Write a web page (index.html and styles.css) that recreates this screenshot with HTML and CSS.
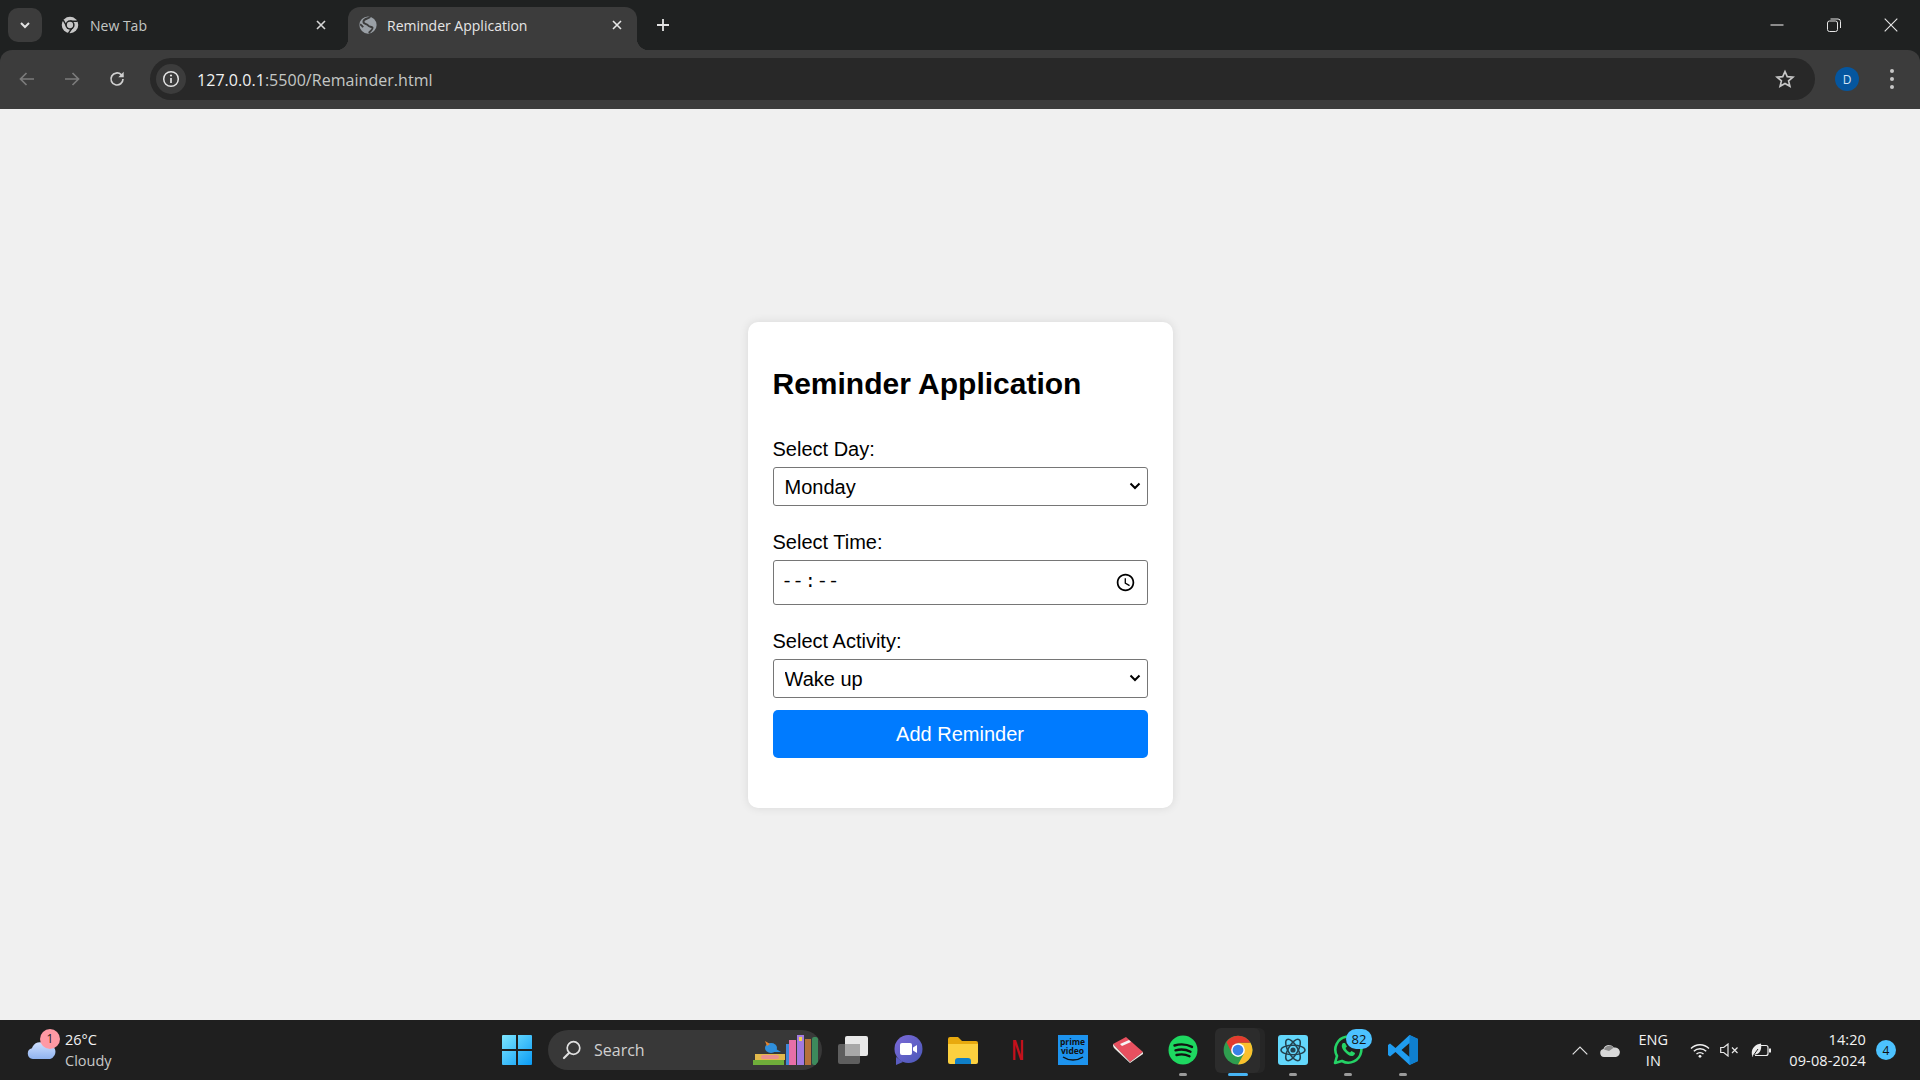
FILE: index.html
```html
<!DOCTYPE html>
<html lang="en">
<head>
<meta charset="utf-8">
<title>Reminder Application</title>
<link rel="stylesheet" href="styles.css">
</head>
<body>
<div class="window">
  <header class="tabstrip">
    <button class="tab-search" type="button" aria-label="Search tabs">
      <svg width="12" height="12" viewBox="0 0 12 12"><path d="M2 4l4 4 4-4" fill="none" stroke="#e3e3e3" stroke-width="2"/></svg>
    </button>
    <div class="tab">
      <svg class="tab-icon" width="18" height="18" viewBox="0 0 24 24"><circle cx="12" cy="12" r="11" fill="#c7c7c7"/><path d="M12 7H22M8 14.500L3 5.500M15.500 15L10 23" stroke="#1f2121" stroke-width="1.800" fill="none"/><circle cx="12" cy="12" r="6.200" fill="#1f2121"/><circle cx="12" cy="12" r="4.200" fill="#c7c7c7"/></svg>
      <span class="tab-title">New Tab</span>
      <svg class="tab-close" width="12" height="12" viewBox="0 0 12 12"><path d="M2 2l8 8M10 2l-8 8" stroke="#d6d6d6" stroke-width="1.600"/></svg>
    </div>
    <div class="tab tab-active">
      <svg class="tab-icon" width="18" height="18" viewBox="0 0 24 24"><circle cx="12" cy="12" r="11.500" fill="#9aa0a6"/><path d="M15 1.500C12 4 7 3 6 7s5 3.500 6 5.500 5 1.500 6 3-3 5-5 7M1.500 11c1.500 1 3 2.500 4 4" fill="none" stroke="#3c3c3c" stroke-width="2.600"/></svg>
      <span class="tab-title">Reminder Application</span>
      <svg class="tab-close" width="12" height="12" viewBox="0 0 12 12"><path d="M2 2l8 8M10 2l-8 8" stroke="#e8e8e8" stroke-width="1.600"/></svg>
    </div>
    <svg class="new-tab" width="16" height="16" viewBox="0 0 16 16"><path d="M8 2v12M2 8h12" stroke="#e3e3e3" stroke-width="1.800"/></svg>
    <div class="window-controls">
      <svg width="14" height="14" viewBox="0 0 14 14"><path d="M0.500 7h13" stroke="#e6e6e6" stroke-width="1.100"/></svg>
      <svg width="14" height="14" viewBox="0 0 14 14"><rect x="0.500" y="3" width="10" height="10.500" rx="2" fill="none" stroke="#e6e6e6" stroke-width="1"/><path d="M3.500 1h7.500a2.500 2.500 0 0 1 2.500 2.500V10" fill="none" stroke="#e6e6e6" stroke-width="1"/></svg>
      <svg width="14" height="14" viewBox="0 0 14 14"><path d="M0.700 0.700l12.600 12.600M13.300 0.700L0.700 13.300" stroke="#e6e6e6" stroke-width="1.100"/></svg>
    </div>
  </header>

  <nav class="toolbar">
    <div class="nav-buttons">
      <svg width="18" height="18" viewBox="0 0 18 18"><path d="M16 9H3M8.500 3L2.500 9l6 6" fill="none" stroke="#7b7b7b" stroke-width="1.700"/></svg>
      <svg width="18" height="18" viewBox="0 0 18 18"><path d="M2 9h13M9.500 3l6 6-6 6" fill="none" stroke="#7b7b7b" stroke-width="1.700"/></svg>
      <svg width="18" height="18" viewBox="0 0 18 18"><path d="M15 9a6 6 0 1 1-1.800-4.300L15 6.500" fill="none" stroke="#d0d0d0" stroke-width="1.700"/><path d="M15.700 1.800v5.400h-5.400z" fill="#d0d0d0"/></svg>
    </div>
    <div class="omnibox">
      <span class="site-info">
        <svg width="18" height="18" viewBox="0 0 18 18"><circle cx="9" cy="9" r="7.300" fill="none" stroke="#e3e3e3" stroke-width="1.500"/><path d="M9 8v5" stroke="#e3e3e3" stroke-width="1.700"/><circle cx="9" cy="5.500" r="1.100" fill="#e3e3e3"/></svg>
      </span>
      <span class="url"><span class="url-host">127.0.0.1</span>:5500/Remainder.html</span>
      <svg class="star" width="20" height="20" viewBox="0 0 24 24"><path d="M12 3l2.700 6.200 6.800.6-5.200 4.400 1.600 6.600L12 17.300l-5.900 3.500 1.600-6.600L2.500 9.800l6.800-.6z" fill="none" stroke="#c7c7c7" stroke-width="2"/></svg>
    </div>
    <span class="avatar">D</span>
    <span class="kebab"><i></i><i></i><i></i></span>
  </nav>

  <main class="page">
    <section class="card">
      <h1 class="card-title">Reminder Application</h1>
      <label class="field-label" for="day">Select Day:</label>
      <select class="field-select" id="day">
        <option>Monday</option><option>Tuesday</option><option>Wednesday</option><option>Thursday</option><option>Friday</option><option>Saturday</option><option>Sunday</option>
      </select>
      <label class="field-label" for="time">Select Time:</label>
      <input class="field-time" id="time" type="time">
      <label class="field-label" for="activity">Select Activity:</label>
      <select class="field-select" id="activity">
        <option>Wake up</option><option>Go to gym</option><option>Breakfast</option><option>Meetings</option><option>Lunch</option><option>Quick nap</option><option>Go to library</option><option>Dinner</option><option>Go to sleep</option>
      </select>
      <button class="add-button" type="button">Add Reminder</button>
    </section>
  </main>

  <footer class="taskbar">
    <div class="weather">
      <span class="weather-icon">
        <svg width="30" height="20" viewBox="0 0 32 22"><defs><linearGradient id="cloud" x1="0" y1="0" x2="0" y2="1"><stop offset="0" stop-color="#cfe0ff"/><stop offset="1" stop-color="#8fb2ee"/></linearGradient></defs><path d="M7 21a6 6 0 0 1-1-11.800A9 9 0 0 1 21 5a7 7 0 0 1 5 16z" fill="url(#cloud)"/></svg>
        <span class="weather-badge">1</span>
      </span>
      <span class="weather-text"><span class="temp">26°C</span><span class="sky">Cloudy</span></span>
    </div>

    <div class="task-center">
      <span class="start">
        <svg width="30" height="30" viewBox="0 0 30 30"><defs><linearGradient id="win" x1="0" y1="0" x2="1" y2="1"><stop offset="0" stop-color="#7de6ff"/><stop offset="1" stop-color="#0a9bf5"/></linearGradient></defs><path d="M0 1a1 1 0 0 1 1-1h13v14H0zM16 0h13a1 1 0 0 1 1 1v13H16zM0 16h14v14H1a1 1 0 0 1-1-1zM16 16h14v13a1 1 0 0 1-1 1H16z" fill="url(#win)"/></svg>
      </span>
      <div class="search-pill">
        <svg width="20" height="20" viewBox="0 0 20 20"><circle cx="11.500" cy="8" r="6.300" fill="none" stroke="#e0e0e0" stroke-width="1.700"/><path d="M7 13l-5 5" stroke="#e0e0e0" stroke-width="2.200" stroke-linecap="round"/></svg>
        <span class="search-text">Search</span>
        <svg class="books" width="68" height="32" viewBox="0 0 68 32"><rect x="1" y="26" width="31" height="5" fill="#6fae3a"/><rect x="3" y="20" width="30" height="6" fill="#e2b94c"/><rect x="9" y="21" width="18" height="4" rx="2" fill="#e98f8f"/><ellipse cx="19" cy="14" rx="6" ry="5" fill="#2f8fdc"/><path d="M21 18l8 0-5-3z" fill="#2f8fdc"/><path d="M13 7l5 3-3 2z" fill="#e8832a"/><rect x="34" y="10" width="3" height="21" fill="#3f86d8"/><rect x="37" y="6" width="7" height="25" fill="#e76fa8"/><rect x="45" y="1" width="7" height="30" fill="#a27ae0"/><rect x="47" y="3" width="3" height="4" fill="#f0d050"/><rect x="53" y="5" width="6" height="26" fill="#b5713a"/><rect x="60" y="3" width="6" height="28" rx="2" fill="#3d8a5c"/></svg>
      </div>
      <div class="apps">
        <span class="app">
          <svg width="30" height="28" viewBox="0 0 30 28"><rect x="0" y="8" width="22" height="20" rx="2" fill="#5e5e5e"/><rect x="7" y="0" width="23" height="20" rx="2" fill="#e8e8e8"/><rect x="7" y="8" width="15" height="12" fill="#a8a8a8"/></svg>
        </span>
        <span class="app">
          <svg width="30" height="30" viewBox="0 0 30 30"><defs><linearGradient id="meet" x1="0" y1="0" x2="1" y2="1"><stop offset="0" stop-color="#7c6ad8"/><stop offset="1" stop-color="#4a58b8"/></linearGradient></defs><circle cx="15.500" cy="14" r="14" fill="url(#meet)"/><path d="M3 22l0 8 7-3z" fill="#5a5cc0"/><rect x="7" y="8" width="12" height="12" rx="2" fill="#fff"/><path d="M20 12.500l4-2.500v8l-4-2.500z" fill="#fff"/></svg>
        </span>
        <span class="app">
          <svg width="30" height="27" viewBox="0 0 30 27"><path d="M0 2a2 2 0 0 1 2-2h8l4 4h14a2 2 0 0 1 2 2v4H0z" fill="#e8a90e"/><path d="M0 7h30v18a2 2 0 0 1-2 2H2a2 2 0 0 1-2-2z" fill="#fcd03f"/><path d="M7 24a3 3 0 0 1 3-3h10a3 3 0 0 1 3 3v3H7z" fill="#0f7fc8"/></svg>
        </span>
        <span class="app"><span class="netflix">N</span></span>
        <span class="app">
          <span class="prime"><span class="prime-line">prime</span><span class="prime-line">video</span><svg width="22" height="6" viewBox="0 0 22 6"><path d="M1 1c6 4 14 4 20 0" fill="none" stroke="#111" stroke-width="1.500"/></svg></span>
        </span>
        <span class="app">
          <svg width="32" height="28" viewBox="0 0 32 28"><path d="M1 8L14 1l17 15-13 10z" fill="#e8505f"/><path d="M1 8c0 2 0 3 2 5l15 14 13-9 0-2-13 10z" fill="#efe9e4"/><path d="M8 8l9-4 2 2-9 4z" fill="#f5f5f5"/></svg>
        </span>
        <span class="app running">
          <svg width="30" height="30" viewBox="0 0 30 30"><circle cx="15" cy="15" r="14.500" fill="#1ed760"/><path d="M6.500 10.500c6-1.800 12-1.400 17.500 1.400M7.500 15.300c5-1.400 10.500-1 15 1.400M8.500 20c4.500-1.100 9-.8 13 1.200" fill="none" stroke="#111" stroke-width="2.400" stroke-linecap="round"/></svg>
        </span>
        <span class="app app-active">
          <svg width="30" height="30" viewBox="0 0 24 24"><circle cx="12" cy="12" r="11.500" fill="#2f9e4f"/><path d="M21.960 6.250A11.500 11.500 0 0 1 12 23.500L16.800 14.800 12 6.250z" fill="#fbc02d"/><path d="M12 .5A11.500 11.500 0 0 1 21.960 6.250H12L7.200 14.800 2.800 5.500A11.500 11.500 0 0 1 12 .5z" fill="#e33b2e"/><circle cx="12" cy="12" r="5.500" fill="#fff"/><circle cx="12" cy="12" r="4.300" fill="#3b82e8"/></svg>
        </span>
        <span class="app running">
          <span class="atom"><svg width="26" height="26" viewBox="0 0 26 26"><g fill="none" stroke="#24424f" stroke-width="1.500"><ellipse cx="13" cy="13" rx="12" ry="4.800"/><ellipse cx="13" cy="13" rx="12" ry="4.800" transform="rotate(60 13 13)"/><ellipse cx="13" cy="13" rx="12" ry="4.800" transform="rotate(120 13 13)"/></g><circle cx="13" cy="13" r="2.600" fill="#24424f"/></svg></span>
        </span>
        <span class="app running">
          <svg width="30" height="30" viewBox="0 0 30 30"><path d="M2 28l2-7A13 13 0 1 1 9 26z" fill="none" stroke="#25d366" stroke-width="2.600" stroke-linejoin="round"/><path d="M10 8c-2 2-1.500 5 1.500 8.500S18 22 20.500 20.500c1-.7 1.500-1.500 1.500-2.500l-3.500-2-1.500 1.500c-2-.7-3.700-2.500-4.500-4.500L14 11.500 12 8z" fill="#25d366"/></svg>
          <span class="count-badge">82</span>
        </span>
        <span class="app running">
          <svg width="30" height="30" viewBox="0 0 30 30"><path d="M21.500 0L30 4v22l-8.500 4L7.500 17 2 21.500 0 20v-10l2-1.500L7.500 13zM21.500 8l-8 7 8 7z" fill="#1f9cf0"/><path d="M21.500 0L30 4v22l-8.500 4V22l0-14z" fill="#0f7fcf"/></svg>
        </span>
      </div>
    </div>

    <div class="tray">
      <svg class="tray-chevron" width="16" height="9" viewBox="0 0 16 9"><path d="M.7 8.300L8 1l7.300 7.300" fill="none" stroke="#e0e0e0" stroke-width="1.200"/></svg>
      <svg class="tray-cloud" width="20" height="13" viewBox="0 0 20 13"><path d="M4 13a4 4 0 0 1-.6-7.900A6 6 0 0 1 14 3.500 4.800 4.800 0 0 1 16 13z" fill="#d8d8d8"/><path d="M4 5.500A6 6 0 0 1 14 3.500L9 7z" fill="#8a8a8a"/></svg>
      <span class="lang"><span>ENG</span><span>IN</span></span>
      <svg class="tray-wifi" width="20" height="15" viewBox="0 0 20 15"><path d="M1 5.500c5-5 13-5 18 0M3.800 8.300c3.500-3.400 9-3.400 12.400 0M6.500 11c2-1.800 5-1.800 7 0" fill="none" stroke="#f0f0f0" stroke-width="1.400"/><circle cx="10" cy="13.300" r="1.400" fill="#f0f0f0"/></svg>
      <svg class="tray-vol" width="19" height="14" viewBox="0 0 19 14"><path d="M.7 4.500h3L8 1v12L3.700 9.500h-3z" fill="none" stroke="#e8e8e8" stroke-width="1.200"/><path d="M12 4.500l5.500 5.500M17.500 4.500L12 10" stroke="#e8e8e8" stroke-width="1.200"/></svg>
      <svg class="tray-batt" width="20" height="15" viewBox="0 0 20 15"><path d="M10 2.500h5a2 2 0 0 1 2 2v6a2 2 0 0 1-2 2H4" fill="none" stroke="#ececec" stroke-width="1.200"/><rect x="18" y="5.500" width="2" height="4" fill="#ececec"/><path d="M1.500 14C-1 7 3 1.500 10 .5c1 6-1 11-7 11.500z" fill="#ececec"/><path d="M2 13l5-7" stroke="#1f1f1f" stroke-width="1"/></svg>
      <span class="clock"><span>14:20</span><span>09-08-2024</span></span>
      <span class="notify">4</span>
    </div>
  </footer>
</div>
</body>
</html>
```

FILE: styles.css
```css
* { box-sizing: border-box; }

html, body { margin: 0; height: 100%; }

body { font-family: "Liberation Sans", Arial, sans-serif; background: #f0f0f0; overflow: hidden; }

.window { display: flex; flex-direction: column; height: 100vh; background: #1f2121; }

/* Tab strip */
.tabstrip {
  position: relative;
  flex: none;
  height: 50px;
  padding-left: 8px;
  display: flex;
  align-items: flex-end;
  background: #1f2121;
  font-family: "Open Sans", "Noto Sans", sans-serif;
}

.tab-search {
  align-self: flex-start;
  width: 34px;
  height: 34px;
  margin: 8px 6px 0 0;
  padding: 0;
  border: 0;
  border-radius: 10px;
  background: #3c3c3c;
  display: flex;
  align-items: center;
  justify-content: center;
}

.tab {
  position: relative;
  width: 289px;
  height: 43px;
  margin-right: 11px;
  padding: 0 10px 7px 13px;
  display: flex;
  align-items: center;
  gap: 11px;
  border-radius: 12px 12px 0 0;
  font-size: 14px;
  color: #c4c7c5;
}

.tab-active {
  margin-right: 0;
  padding: 0 14px 7px 11px;
  gap: 10px;
  background: #3c3c3c;
  color: #e6e6e6;
}

.tab-active::before,
.tab-active::after {
  content: "";
  position: absolute;
  bottom: 0;
  width: 12px;
  height: 12px;
}

.tab-active::before { left: -12px; background: radial-gradient(circle at 0 0, transparent 12px, #3c3c3c 12.500px); }
.tab-active::after { right: -12px; background: radial-gradient(circle at 100% 0, transparent 12px, #3c3c3c 12.500px); }

.tab-icon { flex: none; }
.tab-title { flex: 1; }
.tab-close { flex: none; }

.new-tab { align-self: center; margin: 0 0 0 18px; }

.window-controls {
  position: absolute;
  top: 18px;
  right: 22px;
  display: flex;
  gap: 43px;
}

/* Toolbar */
.toolbar {
  flex: none;
  height: 59px;
  padding: 8px 20px 9px 18px;
  display: flex;
  align-items: center;
  background: #3c3c3c;
  border-radius: 12px 12px 0 0;
}

.nav-buttons { display: flex; gap: 27px; width: 132px; }

.omnibox {
  flex: none;
  width: 1665px;
  height: 42px;
  padding: 0 20px 0 6px;
  display: flex;
  align-items: center;
  border-radius: 21px;
  background: #282828;
}

.site-info {
  flex: none;
  width: 30px;
  height: 30px;
  border-radius: 50%;
  background: #3c3c3c;
  display: flex;
  align-items: center;
  justify-content: center;
}

.url {
  flex: 1;
  margin: 1px 0 0 11px;
  font-family: "Open Sans", "Noto Sans", sans-serif;
  font-size: 16px;
  letter-spacing: .04px;
  color: #c4c7c5;
}

.url-host { color: #f1f1f1; }

.avatar {
  flex: none;
  width: 24px;
  height: 24px;
  margin-left: 20px;
  border-radius: 50%;
  background: #05569f;
  color: #d6e4f5;
  font-family: "Open Sans", sans-serif;
  font-size: 12px;
  display: flex;
  align-items: center;
  justify-content: center;
}

.kebab {
  flex: none;
  margin-left: 31px;
  display: flex;
  flex-direction: column;
  gap: 4px;
}

.kebab i { width: 4px; height: 4px; border-radius: 50%; background: #c7c7c7; }

/* Page */
.page {
  flex: 1;
  min-height: 0;
  display: flex;
  align-items: center;
  justify-content: center;
  background: #f0f0f0;
}

.card {
  width: 425px;
  height: 486px;
  padding: 25px;
  display: flex;
  flex-direction: column;
  border-radius: 10px;
  background: #fff;
  box-shadow: 0 0 10px rgba(0, 0, 0, .1);
}

.card-title {
  margin: 18px 0 35px;
  font-size: 30px;
  line-height: 37px;
  font-weight: 700;
  color: #000;
}

.field-label {
  display: block;
  margin-bottom: 6px;
  padding-top: 1px;
  font-size: 20px;
  line-height: 23px;
  color: #000;
}

.field-select {
  width: 100%;
  height: 39px;
  margin-bottom: 24px;
  padding: 1px 24px 0 11px;
  appearance: none;
  font-family: "Liberation Sans", Arial, sans-serif;
  font-size: 20px;
  color: #000;
  background: #fff url("data:image/svg+xml,%3Csvg xmlns='http://www.w3.org/2000/svg' width='12' height='8' viewBox='0 0 12 8'%3E%3Cpath d='M1.500 1.500L6 6l4.500-4.500' fill='none' stroke='%23000' stroke-width='2'/%3E%3C/svg%3E") no-repeat right 6px center;
  border: 1px solid #767676;
  border-radius: 3px;
}

.field-time {
  width: 100%;
  height: 45px;
  margin-bottom: 24px;
  padding: 8px 8px 8px 7px;
  font-family: "Liberation Mono", monospace;
  font-size: 18.500px;
  color: #000;
  background: #fff;
  border: 1px solid #767676;
  border-radius: 3px;
}

.field-time::-webkit-datetime-edit-ampm-field { display: none; }
.field-time::-webkit-calendar-picker-indicator { font-size: 20px; }

#activity { margin-bottom: 12px; }

.add-button {
  width: 100%;
  height: 48px;
  padding: 1px 0 0;
  border: 0;
  border-radius: 5px;
  background: #007bff;
  color: #fff;
  font-family: "Liberation Sans", Arial, sans-serif;
  font-size: 20px;
}

/* Taskbar */
.taskbar {
  position: relative;
  flex: none;
  height: 60px;
  display: flex;
  align-items: center;
  background: #1f1f1f;
  font-family: "Open Sans", "Noto Sans", sans-serif;
  color: #f2f2f2;
}

.weather {
  flex: none;
  width: 502px;
  padding-left: 26px;
  display: flex;
  align-items: center;
  gap: 9px;
}

.weather-icon { position: relative; display: flex; margin-top: -1px; }

.weather-badge {
  position: absolute;
  top: -11px;
  right: -4px;
  width: 20px;
  height: 20px;
  border-radius: 50%;
  background: #ff99a4;
  color: #1f1f1f;
  font-size: 12px;
  display: flex;
  align-items: center;
  justify-content: center;
}

.weather-text { display: flex; flex-direction: column; font-size: 14.500px; line-height: 21px; }
.sky { color: #c8c8c8; }

.task-center { flex: none; display: flex; align-items: center; }
.start { display: flex; width: 46px; }

.search-pill {
  flex: none;
  width: 274px;
  height: 40px;
  padding: 0 2px 0 14px;
  display: flex;
  align-items: center;
  gap: 12px;
  overflow: hidden;
  border-radius: 20px;
  background: #383838;
}

.search-text { flex: 1; font-size: 16px; color: #d0d0d0; }
.books { flex: none; }

.apps { display: flex; margin-left: 8px; }

.app {
  position: relative;
  flex: none;
  width: 45px;
  height: 45px;
  margin-right: 10px;
  display: flex;
  align-items: center;
  justify-content: center;
}

.running::after {
  content: "";
  position: absolute;
  bottom: -3px;
  left: 50%;
  width: 8px;
  height: 3px;
  margin-left: -4px;
  border-radius: 2px;
  background: #9a9a9a;
}

.app-active {
  border-radius: 6px;
  background: #2c2c2c;
  box-shadow: 5px 0 0 #262626;
}

.app-active::after {
  content: "";
  position: absolute;
  bottom: -3px;
  left: 50%;
  width: 20px;
  height: 3px;
  margin-left: -10px;
  border-radius: 2px;
  background: #47b5f5;
}

.netflix {
  font-family: "Liberation Sans", sans-serif;
  font-size: 30px;
  font-weight: 700;
  line-height: 1;
  color: #c4101b;
  transform: scaleX(.56);
}

.prime {
  width: 30px;
  height: 30px;
  padding-top: 3px;
  display: flex;
  flex-direction: column;
  align-items: center;
  background: #1d93ee;
  color: #111;
}

.prime-line { font-size: 8.500px; line-height: 8.500px; font-weight: 700; }
.prime svg { margin-top: 1px; }

.atom {
  width: 30px;
  height: 30px;
  border-radius: 3px;
  background: #63d7fb;
  display: flex;
  align-items: center;
  justify-content: center;
}

.count-badge {
  position: absolute;
  top: 1px;
  right: -2px;
  width: 26px;
  height: 20px;
  border-radius: 10px;
  background: #4cc2ff;
  color: #111;
  font-size: 13px;
  display: flex;
  align-items: center;
  justify-content: center;
}

.tray {
  position: absolute;
  top: 0;
  right: 0;
  height: 60px;
  display: flex;
  align-items: center;
  font-size: 14.500px;
}

.tray-chevron { margin-right: 12px; }
.tray-cloud { margin-right: 20px; }

.lang {
  width: 26px;
  margin-right: 24px;
  display: flex;
  flex-direction: column;
  align-items: center;
  line-height: 21px;
}

.tray-wifi { margin-right: 10px; }
.tray-vol { margin-right: 12px; }
.tray-batt { margin-right: 18px; }

.clock {
  display: flex;
  flex-direction: column;
  align-items: flex-end;
  line-height: 21px;
  letter-spacing: .1px;
}

.notify {
  width: 20px;
  height: 20px;
  margin: 0 24px 0 10px;
  border-radius: 50%;
  background: #4cc2ff;
  color: #111;
  font-size: 12px;
  display: flex;
  align-items: center;
  justify-content: center;
}
```
